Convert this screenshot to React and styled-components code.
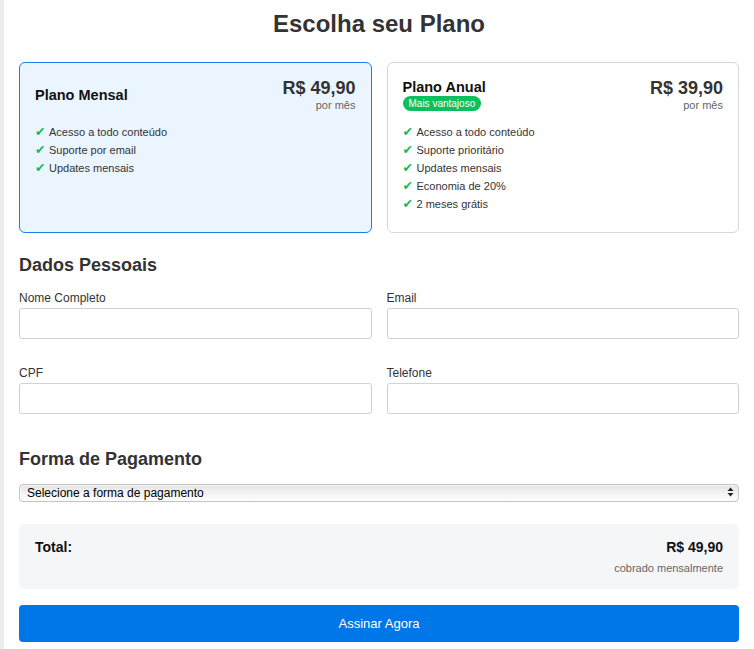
import React, { useState } from 'react'
import styled, { createGlobalStyle } from 'styled-components'

const GlobalStyle = createGlobalStyle`
  html, body {
    margin: 0;
    padding: 0;
    background: #ececec;
  }
  body {
    font-family: "Liberation Sans", Arial, Helvetica, sans-serif;
    color: #333;
  }
  * { box-sizing: border-box; }
`

const plans = [
  {
    id: 'mensal',
    title: 'Plano Mensal',
    price: 'R$ 49,90',
    features: ['Acesso a todo conteúdo', 'Suporte por email', 'Updates mensais'],
  },
  {
    id: 'anual',
    title: 'Plano Anual',
    badge: 'Mais vantajoso',
    price: 'R$ 39,90',
    features: [
      'Acesso a todo conteúdo',
      'Suporte prioritário',
      'Updates mensais',
      'Economia de 20%',
      '2 meses grátis',
    ],
  },
]

export default function App() {
  const [selected, setSelected] = useState('mensal')

  return (
    <Page>
      <GlobalStyle />
      <Container>
        <Title>Escolha seu Plano</Title>

        <PlanGrid>
          {plans.map((plan) => (
            <PlanCard
              key={plan.id}
              $active={selected === plan.id}
              onClick={() => setSelected(plan.id)}
            >
              <PlanHeader>
                <NameBlock>
                  <PlanName>{plan.title}</PlanName>
                  {plan.badge && <Badge>{plan.badge}</Badge>}
                </NameBlock>
                <PriceBlock>
                  <Price>{plan.price}</Price>
                  <Period>por mês</Period>
                </PriceBlock>
              </PlanHeader>
              <Features>
                {plan.features.map((f) => (
                  <Feature key={f}>
                    <Check>✔</Check>
                    {f}
                  </Feature>
                ))}
              </Features>
            </PlanCard>
          ))}
        </PlanGrid>

        <SectionTitle>Dados Pessoais</SectionTitle>
        <FieldGrid>
          <Field>
            <Label>Nome Completo</Label>
            <Input type="text" />
          </Field>
          <Field>
            <Label>Email</Label>
            <Input type="email" />
          </Field>
          <Field>
            <Label>CPF</Label>
            <Input type="text" />
          </Field>
          <Field>
            <Label>Telefone</Label>
            <Input type="tel" />
          </Field>
        </FieldGrid>

        <SectionTitle>Forma de Pagamento</SectionTitle>
        <SelectWrap>
          <Select defaultValue="">
            <option value="">Selecione a forma de pagamento</option>
            <option value="cartao">Cartão de crédito</option>
            <option value="boleto">Boleto</option>
            <option value="pix">Pix</option>
          </Select>
          <SelectArrows width="7" height="10" viewBox="0 0 7 10">
            <path d="M3.5 0.5 L6.5 4 L0.5 4 Z" fill="#222" />
            <path d="M3.5 9.5 L6.5 6 L0.5 6 Z" fill="#222" />
          </SelectArrows>
        </SelectWrap>

        <Summary>
          <TotalLabel>Total:</TotalLabel>
          <TotalRight>
            <TotalValue>{selected === 'mensal' ? 'R$ 49,90' : 'R$ 39,90'}</TotalValue>
            <TotalNote>{selected === 'mensal' ? 'cobrado mensalmente' : 'cobrado anualmente'}</TotalNote>
          </TotalRight>
        </Summary>

        <SubmitButton type="button">Assinar Agora</SubmitButton>
      </Container>
    </Page>
  )
}

const Page = styled.div`
  margin-left: 4px;
  background: #fff;
  min-height: 100vh;
`

const Container = styled.div`
  padding: 10px 15px 20px;
`

const Title = styled.h1`
  margin: 0 0 24px;
  font-size: 24px;
  line-height: 28px;
  font-weight: bold;
  text-align: center;
  color: #333;
`

const PlanGrid = styled.div`
  display: grid;
  grid-template-columns: 1fr 1fr;
  gap: 15px;
  margin-bottom: 21px;
`

const PlanCard = styled.div`
  border: 1px solid ${(p) => (p.$active ? '#1a7fe3' : '#d6d6d6')};
  background: ${(p) => (p.$active ? '#ebf5ff' : '#fff')};
  border-radius: 6px;
  padding: 15px 15px 19px 15px;
  cursor: pointer;
`

const PlanHeader = styled.div`
  display: flex;
  justify-content: space-between;
  align-items: center;
`

const NameBlock = styled.div`
  display: flex;
  flex-direction: column;
  align-items: flex-start;
`

const PlanName = styled.div`
  font-size: 14.5px;
  line-height: 17px;
  font-weight: bold;
  color: #111;
`

const Badge = styled.span`
  background: #0cbf5c;
  color: #fff;
  font-size: 10px;
  line-height: 15px;
  padding: 0 6px;
  border-radius: 8px;
`

const PriceBlock = styled.div`
  text-align: right;
`

const Price = styled.div`
  font-size: 18px;
  line-height: 21px;
  font-weight: bold;
  color: #333;
`

const Period = styled.div`
  font-size: 11px;
  line-height: 13px;
  color: #666;
`

const Features = styled.ul`
  list-style: none;
  margin: 11px 0 0;
  padding: 0;
`

const Feature = styled.li`
  display: flex;
  align-items: center;
  font-size: 11px;
  line-height: 18px;
  color: #333;
`

const Check = styled.span`
  color: #10b956;
  width: 14px;
  font-size: 12.5px;
  font-family: "DejaVu Sans", sans-serif;
`

const SectionTitle = styled.h2`
  margin: 0 0 15px;
  font-size: 18px;
  line-height: 22px;
  font-weight: bold;
  color: #333;
`

const FieldGrid = styled.div`
  display: grid;
  grid-template-columns: 1fr 1fr;
  column-gap: 15px;
  row-gap: 27px;
  margin-bottom: 34px;
`

const Field = styled.div`
  display: flex;
  flex-direction: column;
`

const Label = styled.label`
  font-size: 12px;
  line-height: 14px;
  color: #333;
  margin-bottom: 3px;
`

const Input = styled.input`
  height: 31px;
  border: 1px solid #d2d2d2;
  border-radius: 3px;
  padding: 0 8px;
  font-family: inherit;
  font-size: 12px;
  background: #fff;
`

const SelectWrap = styled.div`
  position: relative;
  margin: -2px 0 22px;
`

const Select = styled.select`
  appearance: none;
  -webkit-appearance: none;
  width: 100%;
  height: 18px;
  padding: 0 20px 0 7px;
  font-family: inherit;
  font-size: 12px;
  color: #000;
  border: 1px solid #c4c4c4;
  border-radius: 4px;
  background: linear-gradient(to bottom, #e4e4e4 0%, #f4f4f4 55%, #fdfdfd 100%);
  box-shadow: inset 1px 1px 0 rgba(255, 255, 255, 0.6);
`

const SelectArrows = styled.svg`
  position: absolute;
  right: 5px;
  top: 4px;
  pointer-events: none;
`

const Summary = styled.div`
  display: flex;
  justify-content: space-between;
  align-items: flex-start;
  background: #f5f6f8;
  border-radius: 6px;
  padding: 15px 16px 14px;
  margin-bottom: 16px;
`

const TotalLabel = styled.div`
  font-size: 14px;
  line-height: 17px;
  font-weight: bold;
  color: #111;
`

const TotalRight = styled.div`
  text-align: right;
`

const TotalValue = styled.div`
  font-size: 14px;
  line-height: 17px;
  font-weight: bold;
  color: #111;
`

const TotalNote = styled.div`
  margin-top: 6px;
  font-size: 11px;
  line-height: 13px;
  color: #666;
`

const SubmitButton = styled.button`
  display: block;
  width: 100%;
  height: 37px;
  border: none;
  border-radius: 4px;
  background: #0077e8;
  color: #fff;
  font-family: inherit;
  font-size: 13px;
  cursor: pointer;
`
